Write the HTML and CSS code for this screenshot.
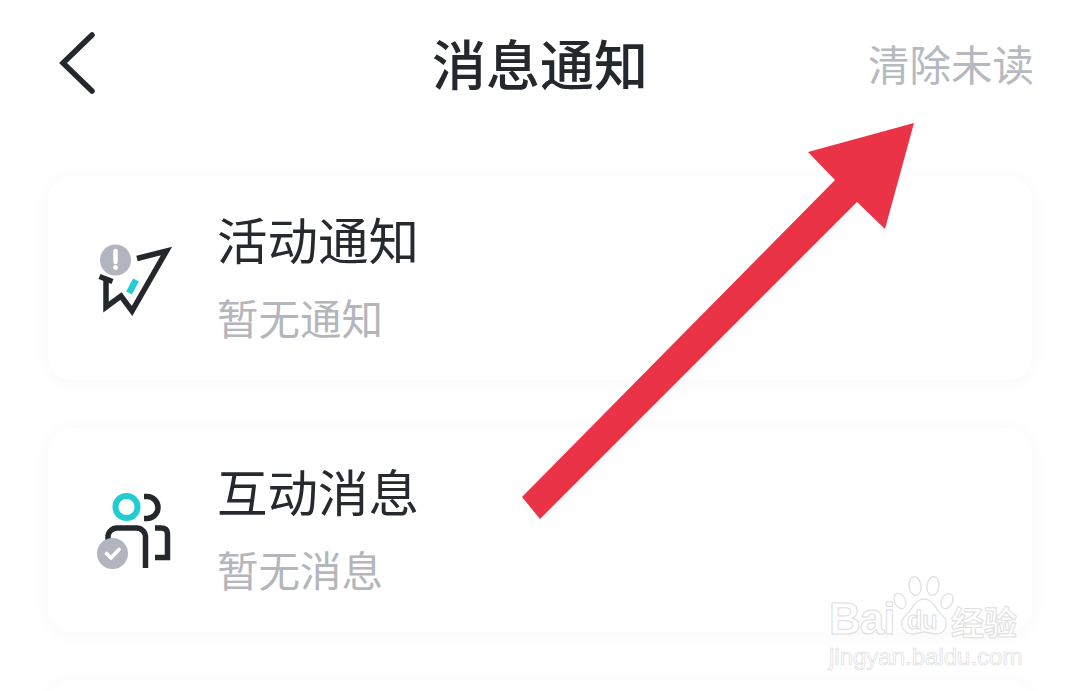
FILE: index.html
```html
<!DOCTYPE html>
<html lang="zh">
<head>
<meta charset="utf-8">
<title>消息通知</title>
<link rel="stylesheet" href="styles.css">
</head>
<body>
<div class="page">
  <header class="bar">
    <svg class="back" viewBox="0 0 44 64" width="44" height="64"><path d="M36 4 L7 32 L36 60" fill="none" stroke="#24272b" stroke-width="5.500" stroke-linecap="round" stroke-linejoin="miter"/></svg>
    <h1 class="title">消息通知</h1>
    <span class="clear">清除未读</span>
  </header>
  <main class="list">
    <section class="card">
      <svg class="icon" viewBox="0 0 110 100" width="110" height="100">
        <path d="M57 28.500 L86.500 21 L52 81 L41 66 L26 77 L26 50" fill="none" stroke="#24272b" stroke-width="5.500"/>
        <path d="M19.500 46.500 L32.500 51.500" fill="none" stroke="#24272b" stroke-width="5.500"/>
        <path d="M56 50 L49 63" fill="none" stroke="#22cdd2" stroke-width="6.500"/>
        <circle cx="35.500" cy="30" r="15.500" fill="#b2b4bf"/>
        <path d="M35.500 21 V32" stroke="#fff" stroke-width="4.500" stroke-linecap="round"/>
        <circle cx="35.500" cy="37.500" r="2.400" fill="#fff"/>
      </svg>
      <div class="text">
        <h2 class="name">活动通知</h2>
        <p class="sub">暂无通知</p>
      </div>
    </section>
    <section class="card">
      <svg class="icon" viewBox="0 0 110 100" width="110" height="100">
        <circle cx="46.500" cy="25" r="11" fill="none" stroke="#22cdd2" stroke-width="6"/>
        <path d="M64 14.500 H67 A11 11 0 0 1 67 36.500 H64" fill="none" stroke="#24272b" stroke-width="5.500"/>
        <path d="M28 62 V55 A9 9 0 0 1 37 46 H56 A9 9 0 0 1 65.500 55 V86" fill="none" stroke="#24272b" stroke-width="5.500"/>
        <path d="M75 46 H81 Q87.500 46 87.500 52 V75.500 H75" fill="none" stroke="#24272b" stroke-width="5.500"/>
        <circle cx="32.500" cy="71.500" r="15.500" fill="#b2b4bf"/>
        <path d="M26.500 71.500 L31 76 L39 67.500" fill="none" stroke="#fff" stroke-width="3.800" stroke-linecap="round" stroke-linejoin="round"/>
      </svg>
      <div class="text">
        <h2 class="name">互动消息</h2>
        <p class="sub">暂无消息</p>
      </div>
    </section>
    <section class="card"></section>
  </main>

  <svg class="arrow" viewBox="0 0 1080 691" width="1080" height="691">
    <polygon points="914,123 808,152 835,180 522,497 540,519 857,202 885,229" fill="#ea3347"/>
  </svg>

  <div class="mark">
    <div class="mark-row">
      <span class="mark-bai">Bai</span>
      <span class="paw">
        <svg viewBox="0 0 62 66" width="62" height="66">
          <g fill="#fff" stroke="#e0e0e0" stroke-width="1.300">
            <ellipse cx="7" cy="27" rx="5.500" ry="8" transform="rotate(-25 7 27)"/>
            <ellipse cx="22" cy="12" rx="6" ry="9.500" transform="rotate(-8 22 12)"/>
            <ellipse cx="40" cy="12" rx="6" ry="9.500" transform="rotate(8 40 12)"/>
            <ellipse cx="54" cy="27" rx="5.500" ry="8" transform="rotate(25 54 27)"/>
            <path d="M31 25 C22 25 20 35 13 41 C5 48 9 60 20 60 C25 60 27 58 31 58 C35 58 38 60 43 60 C53 60 57 48 49 41 C42 35 40 25 31 25 Z"/>
          </g>
        </svg>
        <span class="mark-du">du</span>
      </span>
      <span class="mark-cn">经验</span>
    </div>
    <div class="mark-url">jingyan.baidu.com</div>
  </div>
</div>
</body>
</html>
```

FILE: styles.css
```css
* { box-sizing: border-box; }
html, body { margin: 0; padding: 0; background: #fff; }
body { width: 1080px; height: 691px; overflow: hidden; font-family: "Noto Sans CJK SC", "Noto Sans", sans-serif; }
.page { position: relative; width: 1080px; height: 691px; overflow: hidden; }

.bar { height: 132px; margin-bottom: 44px; padding: 0 46px 6px 56px; display: grid; grid-template-columns: 1fr 212px 1fr; align-items: center; }
.back { display: block; }
.title { margin: 0 0 0 -7px; font-size: 54px; line-height: 1; font-weight: 500; color: #24272b; white-space: nowrap; }
.clear { justify-self: end; margin-top: 2px; font-size: 41.500px; line-height: 1; color: #b6b9bf; }

.list { display: flex; flex-direction: column; gap: 48px; padding: 0 48px; }
.card { height: 204px; flex: none; display: flex; align-items: center; gap: 27px; padding-left: 32px; background: #fff; border-radius: 24px; box-shadow: 0 2px 22px rgba(0, 0, 0, .035); }
.icon { flex: none; display: block; margin-top: 4px; }
.text { display: flex; flex-direction: column; gap: 28px; margin-bottom: 6px; }
.name { margin: 0; font-size: 50.500px; line-height: 56px; font-weight: 400; color: #26292d; }
.sub { margin: 0; font-size: 41.500px; line-height: 46px; color: #b4b6bc; }

.arrow { position: absolute; left: 0; top: 0; pointer-events: none; }

.mark { position: absolute; left: 829px; top: 574px; width: 196px; }
.mark-row { display: flex; align-items: flex-end; height: 66px; }
.mark-bai, .mark-cn, .mark-du, .mark-url { color: #fff; -webkit-text-stroke: 1px #dedede; }
.mark-bai { font-family: "Liberation Sans", sans-serif; font-size: 44px; line-height: 42px; font-weight: 700; letter-spacing: -1px; width: 64px; flex: none; }
.paw { position: relative; flex: none; width: 62px; height: 66px; }
.paw svg { display: block; }
.mark-du { position: absolute; left: 14px; top: 34px; font-family: "Liberation Sans", sans-serif; font-size: 25px; line-height: 25px; font-weight: 700; }
.mark-cn { font-size: 33px; line-height: 38px; font-weight: 700; flex: none; margin-left: -4px; }
.mark-url { margin-top: 4px; font-family: "Liberation Sans", sans-serif; font-size: 24px; line-height: 26px; white-space: nowrap; -webkit-text-stroke-width: .7px; }
```
